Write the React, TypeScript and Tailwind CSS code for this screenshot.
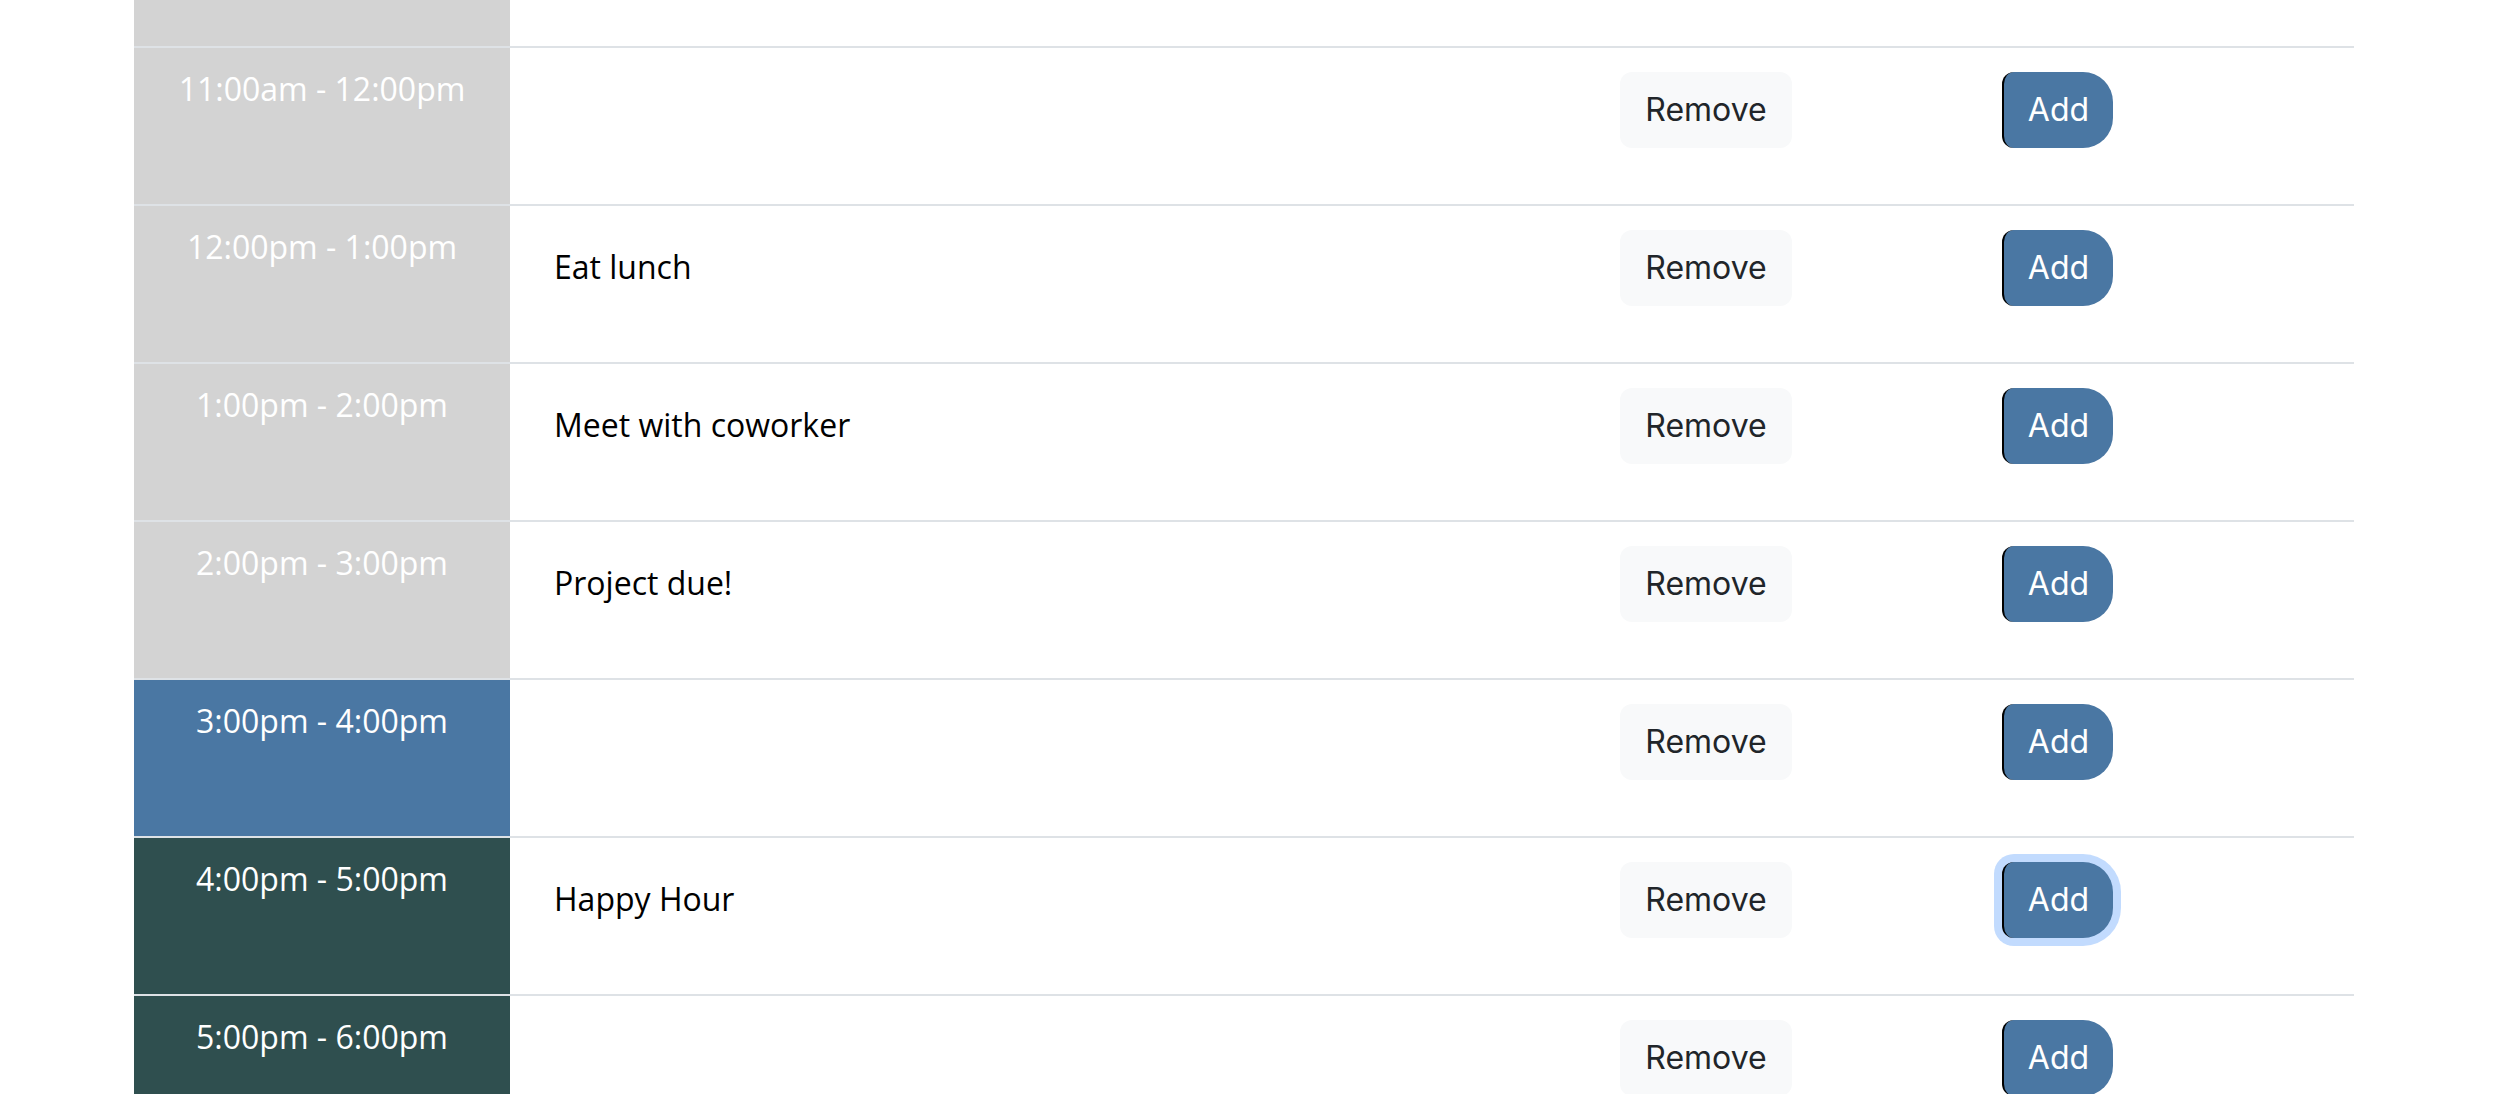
import React from "react";

type Row = { time: string; text: string; bg: string; focused?: boolean };

const rows: Row[] = [
  { time: "11:00am - 12:00pm", text: "", bg: "bg-[#d3d3d3]" },
  { time: "12:00pm - 1:00pm", text: "Eat lunch", bg: "bg-[#d3d3d3]" },
  { time: "1:00pm - 2:00pm", text: "Meet with coworker", bg: "bg-[#d3d3d3]" },
  { time: "2:00pm - 3:00pm", text: "Project due!", bg: "bg-[#d3d3d3]" },
  { time: "3:00pm - 4:00pm", text: "", bg: "bg-[#4a77a3]" },
  { time: "4:00pm - 5:00pm", text: "Happy Hour", bg: "bg-[#2f4f4f]", focused: true },
  { time: "5:00pm - 6:00pm", text: "", bg: "bg-[#2f4f4f]" },
];

export default function App() {
  return (
    <div className="h-screen w-full overflow-hidden bg-white [font-family:'Open_Sans',sans-serif]">
      <div className="ml-[134px] w-[2220px]">
        <div className="flex h-[46px]">
          <div className="w-[376px] bg-[#d3d3d3]" />
        </div>
        {rows.map((r) => (
          <div key={r.time} className="flex h-[158px] border-t-2 border-[#dee2e6]">
            <div
              className={`w-[376px] shrink-0 ${r.bg} pt-[17px] text-center text-[32px] font-medium leading-[48px] text-white`}
            >
              {r.time}
            </div>
            <div className="w-[1110px] shrink-0 pl-[44px] pt-[37px] text-[32px] leading-[48px] text-black">
              {r.text}
            </div>
            <div className="w-[382px] shrink-0 pt-[24px]">
              <button className="h-[76px] w-[172px] rounded-[12px] bg-[#f8f9fa] text-[32px] leading-[48px] text-[#212529] [font-family:Inter,'Liberation_Sans',sans-serif]">
                Remove
              </button>
            </div>
            <div className="pt-[24px]">
              <button
                className={`h-[76px] w-[111px] rounded-l-[12px] rounded-r-[30px] border-l-2 border-black bg-[#4a77a3] text-[32px] leading-[48px] text-white [font-family:Inter,'Liberation_Sans',sans-serif] ${
                  r.focused ? "shadow-[0_0_0_8px_rgba(13,110,253,0.25)]" : ""
                }`}
              >
                Add
              </button>
            </div>
          </div>
        ))}
      </div>
    </div>
  );
}
